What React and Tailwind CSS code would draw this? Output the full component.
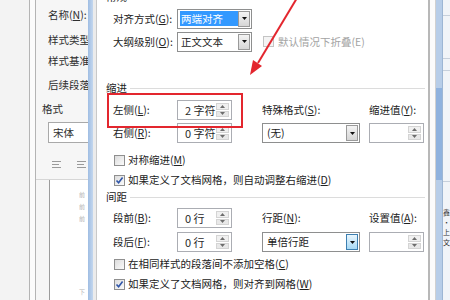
import React from 'react';

const Key = ({ children }) => <span className="underline underline-offset-[1px]">{children}</span>;

function Label({ text, k, className = '' }) {
  return (
    <span className={`whitespace-nowrap ${className}`}>
      {text}(<Key>{k}</Key>):
    </span>
  );
}

function Arrow({ up }) {
  return (
    <svg width="5" height="3" viewBox="0 0 5 3">
      <path d={up ? 'M2.5 0L5 3H0z' : 'M0 0H5L2.5 3z'} fill="#6d6d6d" />
    </svg>
  );
}

function Spinner({ value, w = 'w-[55px]' }) {
  return (
    <div className={`${w} h-[20px] flex items-stretch border border-[#abadb3] bg-white`}>
      <span className="flex-1 pl-[7px] leading-[18px] text-[11px] text-[#2a2a2a] whitespace-pre">{value}</span>
      <div className="w-[13px] flex flex-col gap-px my-[2px] mr-[2px]">
        <div className="flex-1 flex items-center justify-center bg-[#f0f0f0] border border-[#d4d4d4]">
          <Arrow up />
        </div>
        <div className="flex-1 flex items-center justify-center bg-[#e8e8e8] border border-[#d4d4d4]">
          <Arrow />
        </div>
      </div>
    </div>
  );
}

function Select({ children, w, hot }) {
  return (
    <div className={`${w} h-[20px] flex items-stretch border border-[#8e8f8f] bg-white`}>
      <div className="flex-1 flex items-center pl-[2px] overflow-hidden whitespace-nowrap">{children}</div>
      <div
        className={
          hot
            ? 'w-[12px] my-px mr-px flex items-center justify-center border border-[#3c7fb1] bg-gradient-to-b from-[#eaf6fd] to-[#a7d9f5]'
            : 'w-[12px] my-px mr-px flex items-center justify-center border border-[#9a9a9a] bg-gradient-to-b from-[#f4f4f4] to-[#d6d6d6]'
        }
      >
        <svg width="5" height="3" viewBox="0 0 5 3">
          <path d="M0 0H5L2.5 3z" fill="#111" />
        </svg>
      </div>
    </div>
  );
}

function Check({ checked, disabled }) {
  return (
    <span
      className={
        disabled
          ? 'w-[11px] h-[11px] shrink-0 border border-[#c4c4c4] bg-[#f4f4f4]'
          : 'w-[11px] h-[11px] shrink-0 flex items-center justify-center border border-[#8f8f8f] bg-gradient-to-br from-[#dcdcdc] to-[#fbfbfb]'
      }
    >
      {checked && (
        <svg width="9" height="9" viewBox="0 0 9 9">
          <path d="M1.5 4.5L3.6 6.8L7.6 1.6" stroke="#2f55a8" strokeWidth="1.6" fill="none" />
        </svg>
      )}
    </span>
  );
}

function Section({ title, className = '' }) {
  return (
    <div className={`h-[14px] flex items-center pl-[9px] pr-[3px] gap-[3px] ${className}`}>
      <span className="whitespace-nowrap">{title}</span>
      <div className="flex-1 h-px bg-[#dcdcdc]" />
    </div>
  );
}

function CheckRow({ checked, children, className = '' }) {
  return (
    <div className={`h-[16px] flex items-center gap-[3px] pl-[17px] whitespace-nowrap ${className}`}>
      <Check checked={checked} />
      <span>{children}</span>
    </div>
  );
}

function AlignIcon() {
  return (
    <svg width="9" height="8" viewBox="0 0 9 8">
      <path d="M0 0.5H9M0 3.5H7M0 6.5H9" stroke="#9a9a9a" strokeWidth="1" />
    </svg>
  );
}

function StylePanel() {
  // the underlying "modify style" dialog, clipped by the paragraph dialog
  return (
    <div className="w-[52px] bg-[#f6f6f6] flex flex-col overflow-hidden text-[#2e2e2e]">
      <div className="pl-[12px] mt-[8px] h-[14px] whitespace-nowrap">名称(<Key>N</Key>):</div>
      <div className="pl-[12px] mt-[11px] h-[14px] whitespace-nowrap">样式类型</div>
      <div className="pl-[12px] mt-[7px] h-[14px] whitespace-nowrap">样式基准</div>
      <div className="pl-[12px] mt-[10px] h-[14px] whitespace-nowrap">后续段落</div>
      <div className="pl-[6px] mt-[10px] h-[14px] whitespace-nowrap">格式</div>
      <div className="ml-[12px] mt-[6px] h-[21px] w-[60px] shrink-0 bg-white border border-[#a9a9a9] pl-[4px] leading-[19px]">宋体</div>
      <div className="flex items-center gap-[16px] pl-[16px] mt-[17px] h-[10px]">
        <AlignIcon />
        <AlignIcon />
      </div>
      <div className="mt-[9px] h-px bg-[#d6d6d6]" />
      <div className="ml-[13px] flex-1 bg-white border-l border-[#9c9c9c] flex flex-col items-end pr-[3px] pt-[9px] text-[6px] leading-[12px] text-[#b5b5b5]">
        <span>前</span>
        <span>前</span>
        <span>前</span>
        <span className="mt-auto mb-[2px]">下</span>
      </div>
    </div>
  );
}

function RightStrip() {
  return (
    <div className="flex-1 flex">
      <div className="w-[2px] bg-[#b8b8b8]" />
      <div className="w-[6px] bg-[#fbfbfb] border-r border-[#d0d0d0]" />
      <div className="w-[6px] flex flex-col">
        <div className="h-[88px] bg-[#b7cde8]" />
        <div className="h-[92px] bg-[#8fb2de]" />
        <div className="flex-1 bg-[#b7cde8]" />
      </div>
      <div className="flex-1 bg-[#f1f4f8] flex flex-col border-l border-[#9db6d4]">
        <div className="mt-[15px] h-px bg-[#c7d0dc]" />
        <div className="mt-[42px] h-px bg-[#c7d0dc]" />
        <div className="mt-[11px] h-px bg-[#c7d0dc]" />
        <div className="mt-[110px] h-px bg-[#c7d0dc]" />
        <div className="mt-[25px] flex flex-col items-center text-[7px] leading-[10px] text-[#333]">
          <span>鑫</span>
          <span>·</span>
          <span>上</span>
          <span>文</span>
        </div>
      </div>
    </div>
  );
}

function ParagraphDialog() {
  return (
    <div className="w-[331px] bg-white flex flex-col text-[#222]">
      <div className="h-[5px] overflow-hidden pl-[9px]">
        <div className="-mt-[10px] leading-[14px]">常规</div>
      </div>

      <div className="mt-[4px] h-[19px] flex items-center pl-[16px]">
        <Label text="对齐方式" k="G" className="w-[64px]" />
        <Select w="w-[75px]">
          <span className="bg-[#3399ff] text-white px-[1px] w-[58px] leading-[15px]">两端对齐</span>
        </Select>
      </div>

      <div className="mt-[4px] h-[19px] flex items-center pl-[16px]">
        <Label text="大纲级别" k="O" className="w-[64px]" />
        <Select w="w-[75px]">
          <span className="pl-px">正文文本</span>
        </Select>
        <div className="ml-[11px] flex items-center gap-[4px] text-[#a3a3a3] whitespace-nowrap">
          <Check disabled />
          <span>默认情况下折叠(E)</span>
        </div>
      </div>

      <Section title="缩进" className="mt-[30px]" />

      <div className="mt-[5px] h-[20px] flex items-center pl-[16px]">
        <Label text="左侧" k="L" className="w-[64px]" />
        <Spinner value="2 字符" />
        <Label text="特殊格式" k="S" className="ml-[30px] w-[107px]" />
        <Label text="缩进值" k="Y" />
      </div>

      <div className="mt-[3px] h-[20px] flex items-center pl-[16px]">
        <Label text="右侧" k="R" className="w-[64px]" />
        <Spinner value="0 字符" />
        <div className="ml-[30px]">
          <Select w="w-[98px]">
            <span className="pl-[2px]">(无)</span>
          </Select>
        </div>
        <div className="ml-[9px]">
          <Spinner value="" w="w-[55px]" />
        </div>
      </div>

      <CheckRow className="mt-[9px]">
        对称缩进(<Key>M</Key>)
      </CheckRow>
      <CheckRow checked className="mt-[4px]">
        如果定义了文档网格，则自动调整右缩进(<Key>D</Key>)
      </CheckRow>

      <Section title="间距" className="mt-[2px]" />

      <div className="mt-[4px] h-[20px] flex items-center pl-[16px]">
        <Label text="段前" k="B" className="w-[64px]" />
        <Spinner value="0 行" />
        <Label text="行距" k="N" className="ml-[30px] w-[107px]" />
        <Label text="设置值" k="A" />
      </div>

      <div className="mt-[4px] h-[20px] flex items-center pl-[16px]">
        <Label text="段后" k="F" className="w-[64px]" />
        <Spinner value="0 行" />
        <div className="ml-[30px]">
          <Select w="w-[98px]" hot>
            <span className="pl-[2px]">单倍行距</span>
          </Select>
        </div>
        <div className="ml-[9px]">
          <Spinner value="" w="w-[55px]" />
        </div>
      </div>

      <CheckRow className="mt-[4px]">
        在相同样式的段落间不添加空格(<Key>C</Key>)
      </CheckRow>
      <CheckRow checked className="mt-[4px]">
        如果定义了文档网格，则对齐到网格(<Key>W</Key>)
      </CheckRow>
    </div>
  );
}

export default function App() {
  return (
    <div className="relative w-[450px] h-[300px] overflow-hidden flex bg-[#f2f2f2] text-[10.5px] leading-[14px] font-['Microsoft_YaHei','Noto_Sans_CJK_SC',sans-serif]">
      <div className="w-[29px] bg-[#f3f3f3]" />
      <div className="w-[7px] bg-[#fbfbfb] border-x border-[#b4b4b4]" />
      <StylePanel />
      <div className="w-[5px] bg-gradient-to-r from-[#9fbde3] to-[#c4d7ee]" />
      <div className="w-[4px] bg-[#ececec] border-r border-[#c9c9c9]" />
      <ParagraphDialog />
      <RightStrip />

      {/* red highlight box */}
      <div className="absolute left-[107px] top-[93px] w-[136px] h-[35px] border-2 border-[#e3262e] pointer-events-none" />

      {/* red arrow */}
      <svg className="absolute inset-0 pointer-events-none" width="450" height="300" viewBox="0 0 450 300">
        <line x1="297" y1="-2" x2="258" y2="63" stroke="#e3262e" strokeWidth="2" />
        <path d="M250 75L262 66L253 60z" fill="#e3262e" />
      </svg>
    </div>
  );
}
